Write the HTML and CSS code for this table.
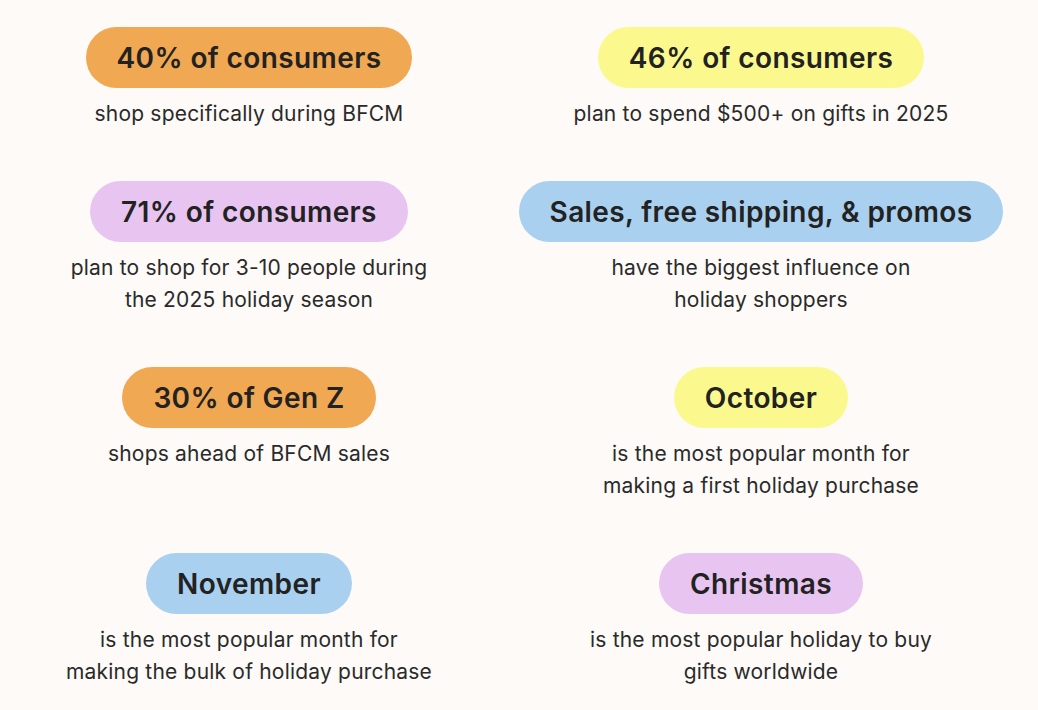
FILE: index.html
```html
<!DOCTYPE html>
<html lang="en">
<head>
<meta charset="utf-8">
<title>Holiday shopping stats</title>
<link rel="stylesheet" href="styles.css">
</head>
<body>
<main class="grid">
  <section class="stat">
    <div class="pill orange">40% of consumers</div>
    <p class="desc">shop specifically during BFCM</p>
  </section>
  <section class="stat">
    <div class="pill yellow">46% of consumers</div>
    <p class="desc">plan to spend $500+ on gifts in 2025</p>
  </section>
  <section class="stat">
    <div class="pill purple">71% of consumers</div>
    <p class="desc">plan to shop for 3-10 people during<br>the 2025 holiday season</p>
  </section>
  <section class="stat">
    <div class="pill blue">Sales, free shipping, &amp; promos</div>
    <p class="desc">have the biggest influence on<br>holiday shoppers</p>
  </section>
  <section class="stat">
    <div class="pill orange">30% of Gen Z</div>
    <p class="desc">shops ahead of BFCM sales</p>
  </section>
  <section class="stat">
    <div class="pill yellow">October</div>
    <p class="desc">is the most popular month for<br>making a first holiday purchase</p>
  </section>
  <section class="stat">
    <div class="pill blue">November</div>
    <p class="desc">is the most popular month for<br>making the bulk of holiday purchase</p>
  </section>
  <section class="stat">
    <div class="pill purple">Christmas</div>
    <p class="desc">is the most popular holiday to buy<br>gifts worldwide</p>
  </section>
</main>
</body>
</html>
```
FILE: styles.css
```css
html, body {
  margin: 0;
  padding: 0;
  background: #fdfaf7;
}
body {
  font-family: Inter, "Noto Sans", "Liberation Sans", sans-serif;
  color: #222222;
}
.grid {
  display: grid;
  grid-template-columns: 498px 498px;
  column-gap: 14px;
  row-gap: 51px;
  padding-top: 27px;
}
.stat {
  display: flex;
  flex-direction: column;
  align-items: center;
  gap: 10px;
}
.pill {
  height: 61px;
  box-sizing: border-box;
  padding: 0 31px;
  border-radius: 31px;
  display: flex;
  align-items: center;
  font-size: 28px;
  font-weight: 600;
  letter-spacing: 0.4px;
  white-space: nowrap;
}
.orange { background: #f0a852; }
.yellow { background: #fbf98e; }
.purple { background: #e8c5f0; }
.blue { background: #a9d0ee; }
.desc {
  margin: 0;
  font-size: 21px;
  line-height: 32px;
  letter-spacing: 0.2px;
  text-align: center;
  color: #2a2a2a;
}
```
